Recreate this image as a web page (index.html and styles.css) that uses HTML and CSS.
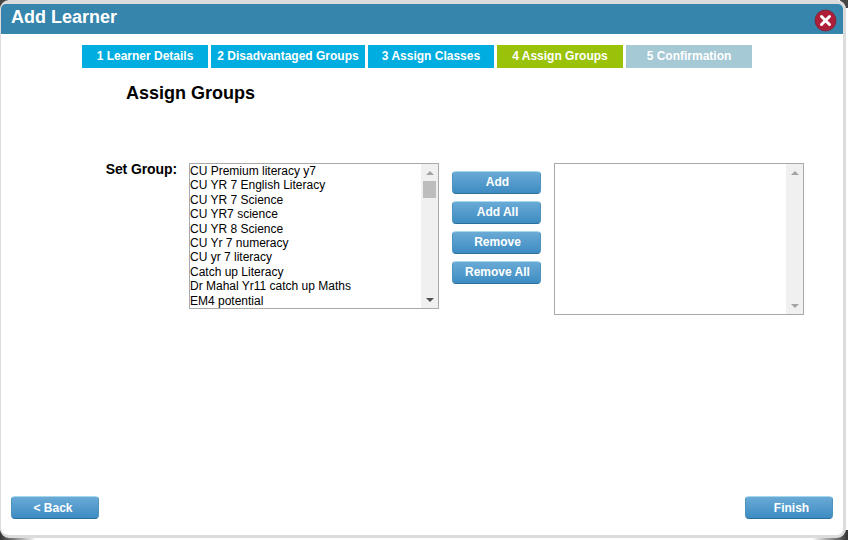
FILE: index.html
```html
<!DOCTYPE html>
<html lang="en">
<head>
<meta charset="utf-8">
<title>Add Learner</title>
<link rel="stylesheet" href="styles.css">
</head>
<body>
<div class="modal">
  <header class="titlebar">
    <h1 class="title">Add Learner</h1>
    <svg class="close" width="23" height="23" viewBox="0 0 23 23" aria-label="Close">
      <circle cx="11.5" cy="11.5" r="10.5" fill="#ad1f38" stroke="#7d2a3c" stroke-width="1"/>
      <path d="M7.5 7.5l8 8M15.5 7.5l-8 8" stroke="#fff" stroke-width="3" stroke-linecap="round"/>
    </svg>
  </header>
  <nav class="steps">
    <div class="step step-w126">1 Learner Details</div>
    <div class="step step-w154">2 Disadvantaged Groups</div>
    <div class="step step-w126">3 Assign Classes</div>
    <div class="step step-w126 step-current">4 Assign Groups</div>
    <div class="step step-w126 step-future">5 Confirmation</div>
  </nav>
  <h2 class="heading">Assign Groups</h2>
  <section class="picker">
    <div class="label">Set Group:</div>
    <div class="listbox listbox-left">
      <div class="options">
        <div class="option">CU Premium literacy y7</div>
        <div class="option">CU YR 7 English Literacy</div>
        <div class="option">CU YR 7 Science</div>
        <div class="option">CU YR7 science</div>
        <div class="option">CU YR 8 Science</div>
        <div class="option">CU Yr 7 numeracy</div>
        <div class="option">CU yr 7 literacy</div>
        <div class="option">Catch up Literacy</div>
        <div class="option">Dr Mahal Yr11 catch up Maths</div>
        <div class="option">EM4 potential</div>
      </div>
      <div class="scrollbar">
        <span class="arrow arrow-up"></span>
        <span class="thumb"></span>
        <span class="spacer"></span>
        <span class="arrow arrow-down arrow-dark"></span>
      </div>
    </div>
    <div class="actions">
      <button class="btn">Add</button>
      <button class="btn">Add All</button>
      <button class="btn">Remove</button>
      <button class="btn">Remove All</button>
    </div>
    <div class="listbox listbox-right">
      <div class="options"></div>
      <div class="scrollbar">
        <span class="arrow arrow-up"></span>
        <span class="spacer"></span>
        <span class="arrow arrow-down"></span>
      </div>
    </div>
  </section>
  <footer class="footer">
    <button class="btn btn-wide btn-back">&lt; Back</button>
    <button class="btn btn-wide btn-finish">Finish</button>
  </footer>
</div>
</body>
</html>
```

FILE: styles.css
```css
html, body {
  margin: 0;
  height: 100%;
}
body {
  width: 848px;
  height: 540px;
  overflow: hidden;
  font-family: "Liberation Sans", Arial, sans-serif;
  background:
    linear-gradient(#444, #444) left top / 8px 8px no-repeat,
    linear-gradient(#444, #444) right top / 8px 8px no-repeat,
    linear-gradient(to left, #333, #fff) right bottom / 36px 10px no-repeat,
    linear-gradient(to right, #333, #fff) left bottom / 36px 10px no-repeat,
    #fff;
}
.modal {
  box-sizing: border-box;
  width: 846px;
  height: 538px;
  display: flex;
  flex-direction: column;
  background: #fff;
  border-style: solid;
  border-color: #dcdcdc;
  border-width: 4px 3px 3px 1px;
  border-radius: 9px;
}
.titlebar {
  height: 30px;
  flex: none;
  display: flex;
  align-items: center;
  justify-content: space-between;
  background: #3585ad;
  padding: 0 6px 0 10px;
  border-radius: 5px 5px 0 0;
}
.title {
  margin: 0;
  font-size: 18px;
  font-weight: bold;
  color: #fff;
  line-height: 26px;
  align-self: flex-start;
}
.close {
  flex: none;
  margin-top: 2px;
}
.steps {
  display: flex;
  gap: 3px;
  margin: 11px 0 0 81px;
}
.step {
  height: 23px;
  line-height: 22px;
  text-align: center;
  font-size: 12px;
  font-weight: bold;
  color: #fff;
  background: #00ade0;
}
.step-w126 { width: 126px; }
.step-w154 { width: 154px; }
.step-current { background: #99c208; }
.step-future { background: #a6c9d6; }
.heading {
  margin: 14px 0 0 125px;
  font-size: 18px;
  line-height: 22px;
  font-weight: bold;
  color: #000;
}
.picker {
  display: flex;
  align-items: flex-start;
  margin-top: 59px;
}
.label {
  width: 176px;
  text-align: right;
  font-size: 14px;
  font-weight: bold;
  line-height: 14px;
  letter-spacing: -0.1px;
  margin-top: -1px;
  color: #000;
}
.listbox {
  box-sizing: border-box;
  width: 250px;
  display: flex;
  border: 1px solid #a9a9a9;
  background: #fff;
}
.listbox-left {
  height: 146px;
  margin-left: 12px;
}
.listbox-right {
  height: 152px;
  margin-left: 13px;
}
.options {
  flex: 1;
  overflow: hidden;
}
.option {
  height: 14.4px;
  line-height: 14.4px;
  font-size: 12px;
  color: #000;
  white-space: nowrap;
}
.scrollbar {
  flex: none;
  width: 17px;
  box-sizing: border-box;
  background: #f0f0f0;
  display: flex;
  flex-direction: column;
  align-items: center;
  padding: 7px 0 6px;
}
.arrow {
  flex: none;
  width: 0;
  height: 0;
  border-left: 4px solid transparent;
  border-right: 4px solid transparent;
}
.arrow-up { border-bottom: 4px solid #a3a3a3; }
.arrow-down { border-top: 4px solid #a3a3a3; }
.arrow-dark { border-top-color: #505050; }
.thumb {
  flex: none;
  width: 13px;
  height: 17px;
  margin-top: 6px;
  background: #bdbdbd;
}
.spacer { flex: 1; }
.actions {
  width: 89px;
  flex: none;
  display: flex;
  flex-direction: column;
  gap: 7px;
  margin: 8px 0 0 13px;
}
.btn {
  box-sizing: border-box;
  display: block;
  width: 89px;
  height: 23px;
  padding: 0 0 1px 2px;
  border: 1px solid #4d93c0;
  border-top-color: #a5d8ef;
  border-bottom-color: #2b6f9b;
  border-radius: 4px;
  background: linear-gradient(#6aaad6, #3d8cc2);
  color: #fff;
  font: bold 12px "Liberation Sans", Arial, sans-serif;
  text-align: center;
}
.btn-wide { width: 88px; }
.btn-back { padding: 0 4px 0 0; }
.btn-finish { padding: 0 0 0 5px; }
.footer {
  margin-top: auto;
  display: flex;
  justify-content: space-between;
  padding: 0 10px 16px 10px;
}
```
